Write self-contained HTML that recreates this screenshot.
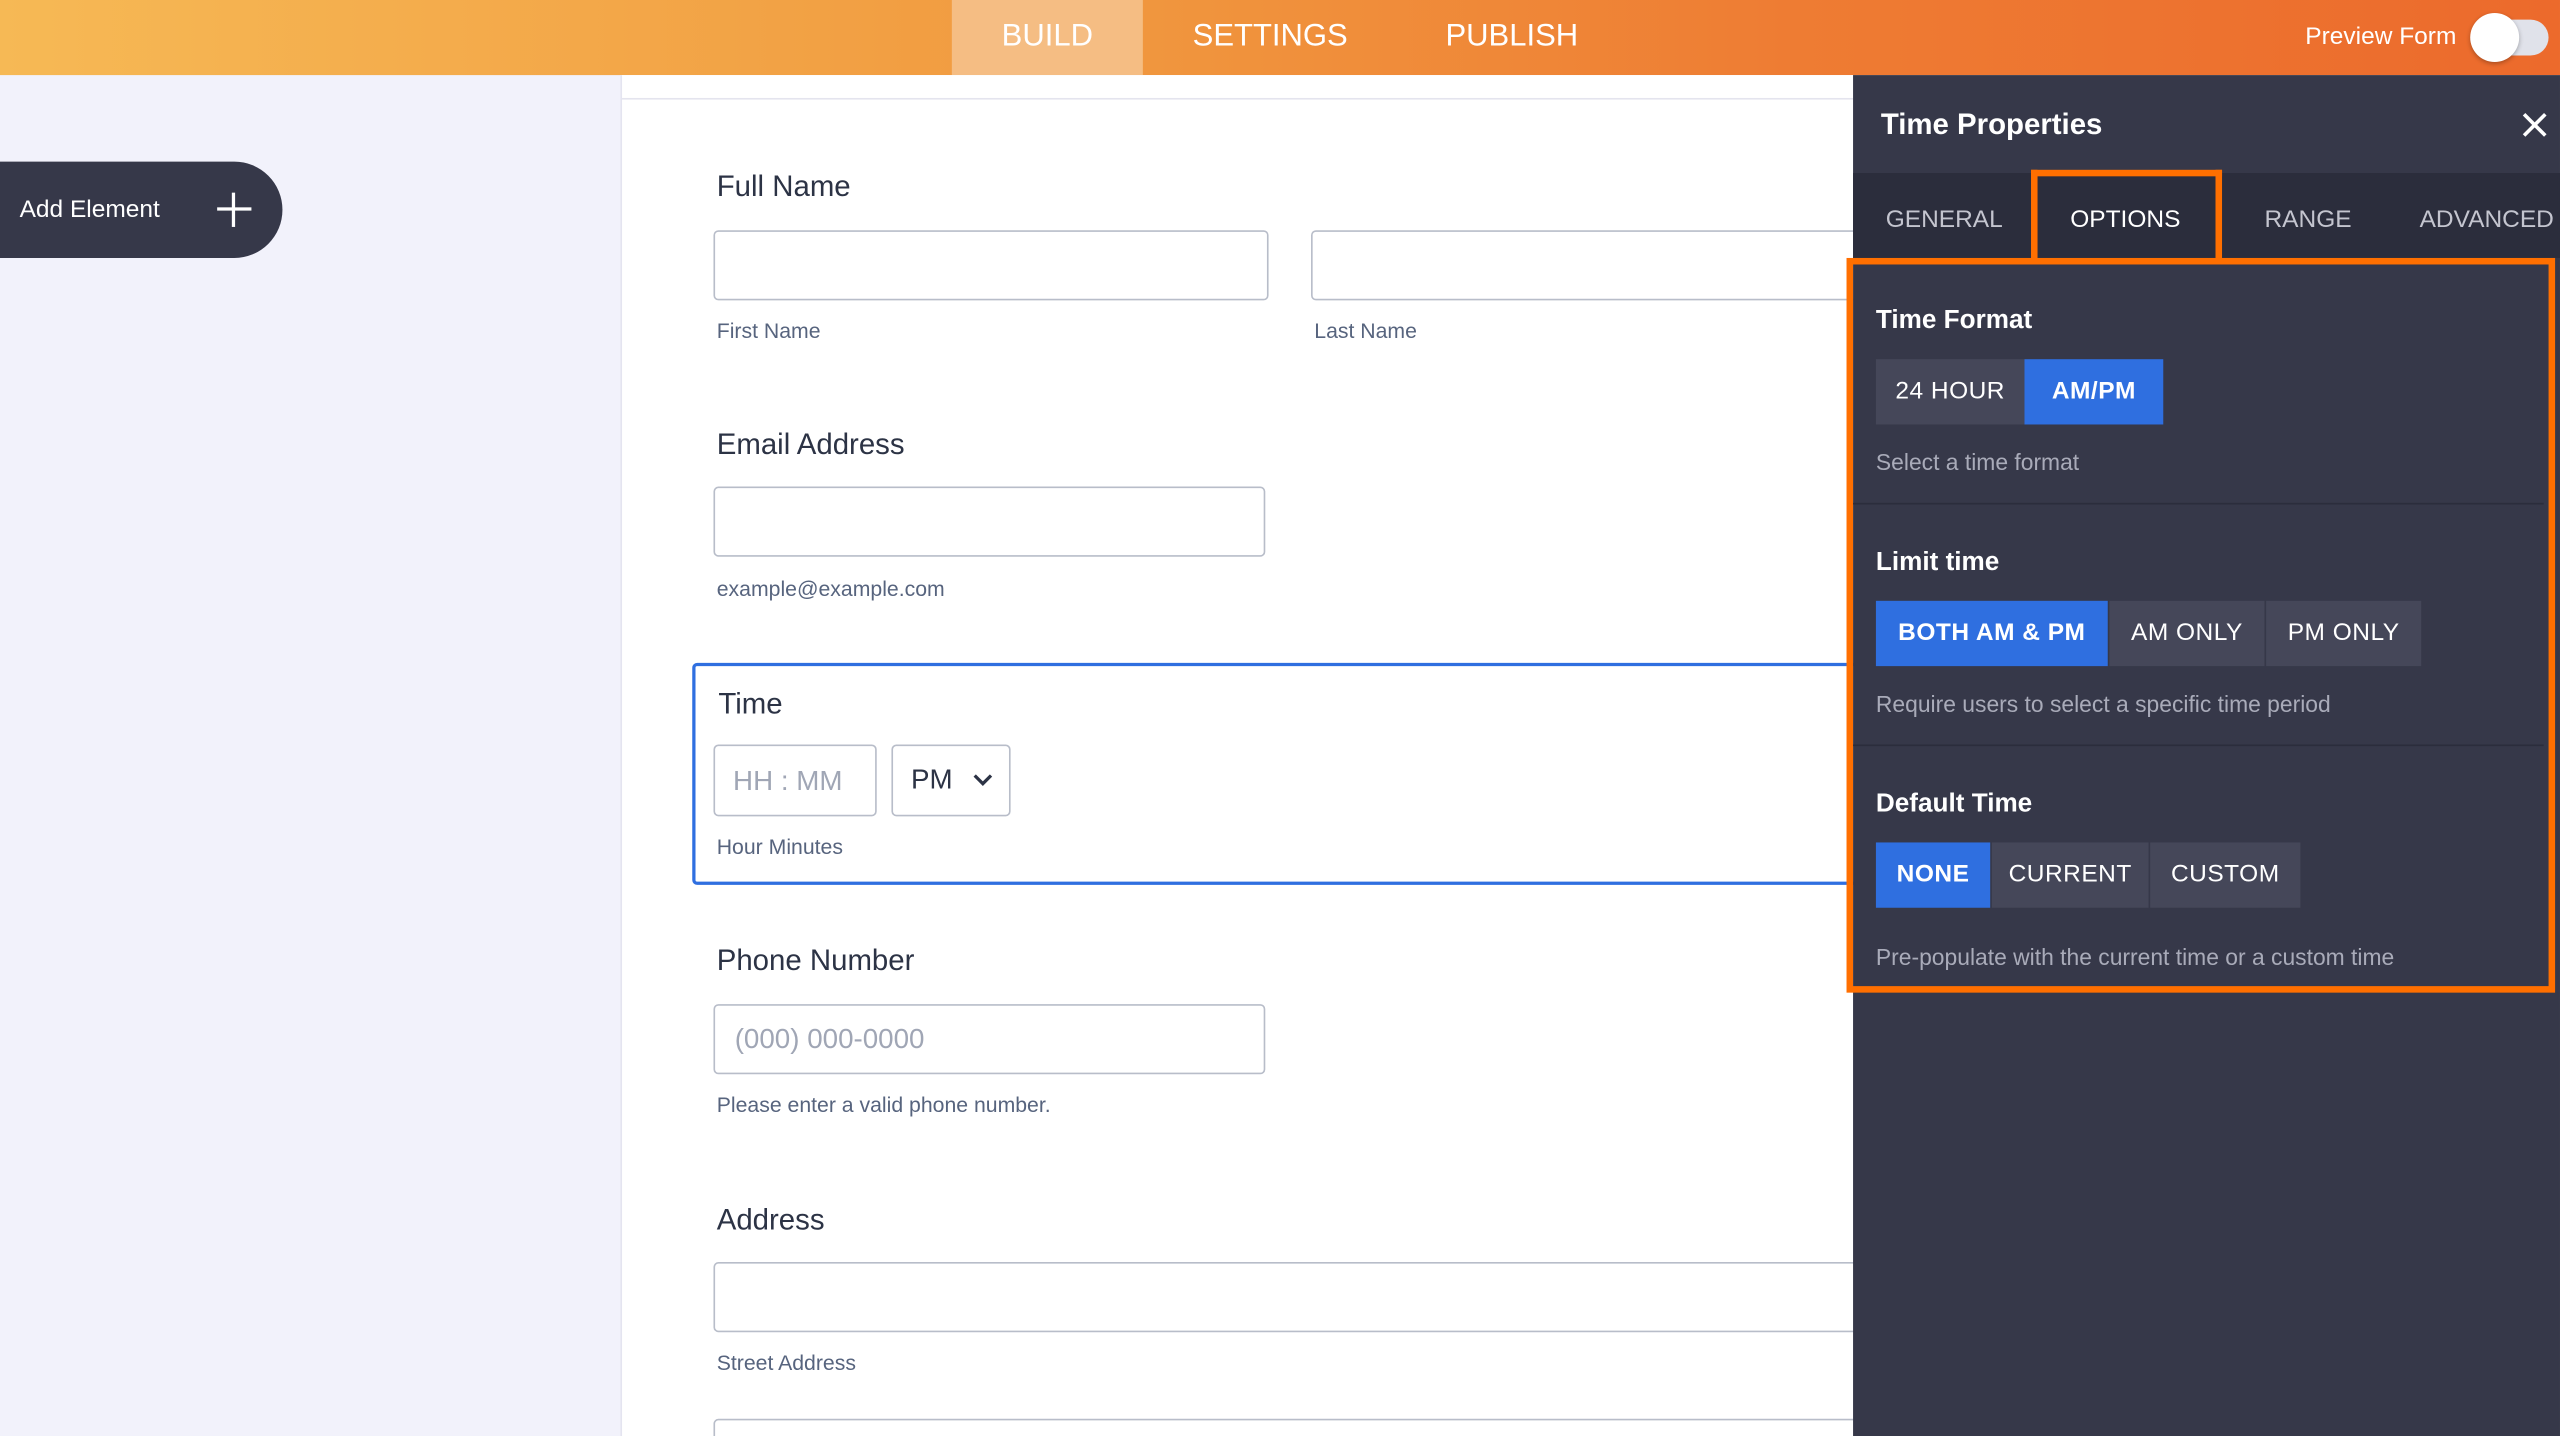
<!DOCTYPE html>
<html><head><meta charset="utf-8"><style>
*{box-sizing:border-box;margin:0;padding:0}
html,body{width:2560px;height:1436px;overflow:hidden;background:#f2f2fb}
#w{position:absolute;left:0;top:0;width:1568px;height:879.5px;overflow:hidden;transform:scale(1.63265);transform-origin:0 0;font-family:"Liberation Sans",sans-serif;background:#f2f2fb}
.a{position:absolute}
.top{left:0;top:0;width:1568px;height:46px;background:linear-gradient(90deg,#f6b955 0%,#f19b40 40%,#ee7c33 70%,#ec6a2c 100%)}
.nav{top:0;height:46px;line-height:46px;color:#fff;font-size:19px;text-align:center}
.form{left:380px;top:46px;width:755px;height:834px;background:#fff;border-left:1px solid #e4e4f0}
.lbl{font-size:18px;color:#2c3345}
.sub{font-size:13px;color:#57647e}
.inp{border:1px solid #b8bdc9;border-radius:3px;background:#fff}
.ph{color:#a0a6b5;font-size:17px}
.panel{left:1135px;top:46px;width:433px;height:834px;background:#363849}
.btn{position:absolute;height:40px;line-height:40px;font-size:15px;color:#fff;text-align:center;background:#454759;letter-spacing:.3px}
.sel{background:#2f6fe0;font-weight:bold}
.h{font-size:16px;font-weight:bold;color:#fff}
.d{font-size:14px;color:#a9abb9}
</style></head><body><div id="w">
<div class="a top"></div>
<div class="a nav" style="left:583px;width:117px;background:#f5bd83">BUILD</div>
<div class="a nav" style="left:712px;width:132px">SETTINGS</div>
<div class="a nav" style="left:868px;width:116px">PUBLISH</div>
<div class="a" style="left:1412px;top:14px;color:#fff;font-size:15px">Preview Form</div>
<div class="a" style="left:1515px;top:12px;width:46px;height:22px;border-radius:11px;background:#e0e2ea"></div>
<div class="a" style="left:1513px;top:8px;width:30px;height:30px;border-radius:15px;background:#fff;box-shadow:0 1px 3px rgba(0,0,0,.3)"></div>

<div class="a" style="left:0;top:99px;width:173px;height:59px;background:#363849;border-radius:0 30px 30px 0"></div>
<div class="a" style="left:12px;top:120px;color:#fff;font-size:15px">Add Element</div>
<div class="a" style="left:133px;top:127px;width:21px;height:2px;background:#fff"></div>
<div class="a" style="left:142px;top:118px;width:2px;height:21px;background:#fff"></div>

<div class="a form"></div>
<div class="a" style="left:381px;top:60px;width:754px;height:1px;background:#e4e4ee"></div>
<div class="a lbl" style="left:439px;top:104px">Full Name</div>
<div class="a inp" style="left:437px;top:141px;width:340px;height:43px"></div>
<div class="a inp" style="left:803px;top:141px;width:340px;height:43px"></div>
<div class="a sub" style="left:439px;top:195px">First Name</div>
<div class="a sub" style="left:805px;top:195px">Last Name</div>
<div class="a lbl" style="left:439px;top:262px">Email Address</div>
<div class="a inp" style="left:437px;top:298px;width:338px;height:43px"></div>
<div class="a sub" style="left:439px;top:353px">example@example.com</div>
<div class="a" style="left:424px;top:406px;width:720px;height:136px;border:2px solid #2f6fe0;border-radius:3px"></div>
<div class="a lbl" style="left:440px;top:421px">Time</div>
<div class="a inp" style="left:437px;top:456px;width:100px;height:44px"></div>
<div class="a ph" style="left:449px;top:469px">HH : MM</div>
<div class="a inp" style="left:546px;top:456px;width:73px;height:44px"></div>
<div class="a" style="left:558px;top:468px;font-size:17px;color:#2c3345">PM</div>
<svg class="a" style="left:596px;top:473px" width="12" height="10"><path d="M1 2l5 5 5-5" stroke="#2c3345" stroke-width="2" fill="none"/></svg>
<div class="a sub" style="left:439px;top:511px">Hour Minutes</div>
<div class="a lbl" style="left:439px;top:578px">Phone Number</div>
<div class="a inp" style="left:437px;top:615px;width:338px;height:43px"></div>
<div class="a ph" style="left:450px;top:627px">(000) 000-0000</div>
<div class="a sub" style="left:439px;top:669px">Please enter a valid phone number.</div>
<div class="a lbl" style="left:439px;top:737px">Address</div>
<div class="a inp" style="left:437px;top:773px;width:720px;height:43px"></div>
<div class="a sub" style="left:439px;top:827px">Street Address</div>
<div class="a inp" style="left:437px;top:869px;width:720px;height:43px"></div>

<div class="a panel"></div>
<div class="a" style="left:1152px;top:66px;color:#fff;font-size:18px;font-weight:bold">Time Properties</div>
<svg class="a" style="left:1545px;top:69px" width="15" height="15"><path d="M1 1l13 13M14 1L1 14" stroke="#fff" stroke-width="2.2"/></svg>
<div class="a" style="left:1135px;top:106px;width:433px;height:52px;background:#2b2d3c"></div>
<div class="a" style="left:1155px;top:126px;color:#c4c5cf;font-size:15px">GENERAL</div>
<div class="a" style="left:1244px;top:104px;width:117px;height:55px;border:4px solid #ff6f00;border-bottom:none"></div>
<div class="a" style="left:1268px;top:126px;color:#fff;font-size:15px">OPTIONS</div>
<div class="a" style="left:1387px;top:126px;color:#c4c5cf;font-size:15px">RANGE</div>
<div class="a" style="left:1482px;top:126px;color:#c4c5cf;font-size:15px">ADVANCED</div>
<div class="a" style="left:1131px;top:158px;width:434px;height:450px;border:4px solid #ff6f00"></div>
<div class="a h" style="left:1149px;top:188px">Time Format</div>
<div class="btn" style="left:1149px;top:220px;width:91px">24 HOUR</div>
<div class="btn sel" style="left:1240px;top:220px;width:85px">AM/PM</div>
<div class="a d" style="left:1149px;top:275px">Select a time format</div>
<div class="a" style="left:1135px;top:308px;width:423px;height:1px;background:#2b2d3c"></div>
<div class="a h" style="left:1149px;top:336px">Limit time</div>
<div class="btn sel" style="left:1149px;top:368px;width:142px">BOTH AM &amp; PM</div>
<div class="btn" style="left:1292px;top:368px;width:95px">AM ONLY</div>
<div class="btn" style="left:1388px;top:368px;width:95px">PM ONLY</div>
<div class="a d" style="left:1149px;top:423px">Require users to select a specific time period</div>
<div class="a" style="left:1135px;top:456px;width:423px;height:1px;background:#2b2d3c"></div>
<div class="a h" style="left:1149px;top:484px">Default Time</div>
<div class="btn sel" style="left:1149px;top:516px;width:70px">NONE</div>
<div class="btn" style="left:1220px;top:516px;width:96px">CURRENT</div>
<div class="btn" style="left:1317px;top:516px;width:92px">CUSTOM</div>
<div class="a d" style="left:1149px;top:578px">Pre-populate with the current time or a custom time</div>
</div></body></html>
